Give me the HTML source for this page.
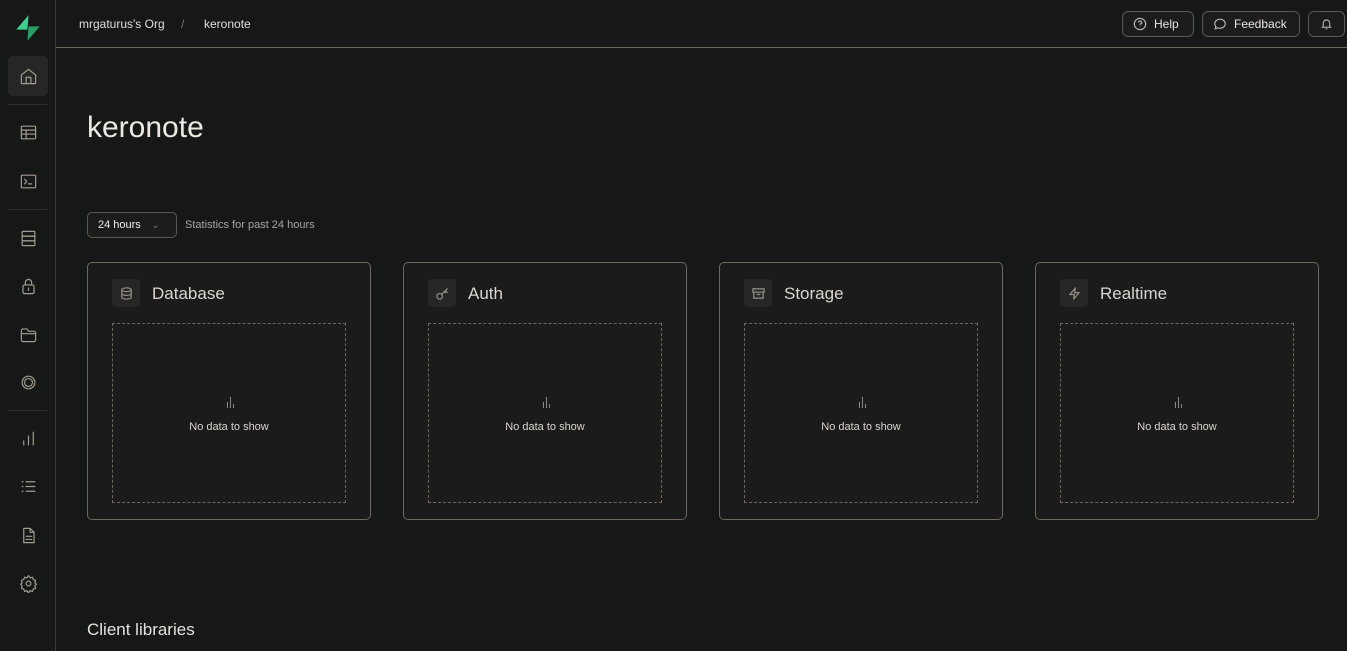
<!DOCTYPE html>
<html><head><style>
*{box-sizing:border-box;margin:0;padding:0}
body{width:1347px;height:651px;overflow:hidden;background:#161717;font-family:"Liberation Sans",sans-serif;color:#ededed;position:relative}
.side{position:absolute;left:0;top:0;width:56px;height:651px;border-right:1px solid #3a3833;background:#161717}
.ic{position:absolute;left:8px;width:40px;height:40px;display:flex;align-items:center;justify-content:center}
.ic svg{width:19px;height:19px;stroke:#a09c92;fill:none;stroke-width:1.5;stroke-linecap:round;stroke-linejoin:round}
.div{position:absolute;left:8px;width:39px;height:1px;background:#2e2e2e}
.top{position:absolute;left:56px;top:0;right:0;height:48px;border-bottom:1px solid #6d675c}
.crumb{position:absolute;top:17px;font-size:12px;color:#e0ded8}
.btn{position:absolute;top:11px;height:26px;border:1px solid #5c574e;border-radius:6px;background:#1c1c1c;font-size:12px;color:#e8e6e0;display:flex;align-items:center;gap:7px;padding:0 10px}
.btn svg{width:14px;height:14px;stroke:#bbb;fill:none;stroke-width:1.3}
h1{position:absolute;left:87px;top:111px;font-size:30px;font-weight:400;color:#ece9e2}
.sel{position:absolute;left:87px;top:212px;width:90px;height:26px;border:1px solid #5c574e;border-radius:5px;background:#1c1c1c;font-size:11px;color:#eee;padding:6px 10px}
.card{position:absolute;top:262px;width:284px;height:258px;border:1px solid #6d675c;border-radius:5px;background:#1b1b1b}
.ch{position:absolute;left:24px;top:16px;width:28px;height:28px;border-radius:4px;background:#262626;display:flex;align-items:center;justify-content:center}
.ch svg{width:15px;height:15px;stroke:#8f8b82;fill:none;stroke-width:1.4;stroke-linecap:round;stroke-linejoin:round}
.ct{position:absolute;left:64px;top:21px;font-size:17px;color:#d9d6cf}
.dash{position:absolute;left:24px;top:60px;width:234px;height:180px;border:1px dashed #6a665e}
.nd{position:absolute;left:0;right:0;top:97px;text-align:center;font-size:11px;color:#d8d6d0}
.bars{position:absolute;left:112px;top:72px;width:10px;height:12px}
.bars i{position:absolute;bottom:0;width:1px;background:#888}
h2{position:absolute;left:87px;top:620px;font-size:17px;font-weight:400;color:#e5e2dc}
</style></head><body>
<div class="side">
<svg style="position:absolute;left:14px;top:14px" width="28" height="28" viewBox="0 0 25 25"><path d="M13 1 L2 14 H12 Z" fill="#3ecf8e"/><path d="M12 24 L23 11 H13 Z" fill="#2a9d68"/></svg>
<div class="ic" style="top:56px;background:#262626;border-radius:6px"><svg viewBox="0 0 24 24"><path d="M3 10l9-7 9 7v10a1 1 0 0 1-1 1H4a1 1 0 0 1-1-1z"/><path d="M9 21v-8h6v8"/></svg></div>
<div class="div" style="top:104px"></div>
<div class="ic" style="top:112px"><svg viewBox="0 0 24 24"><rect x="3" y="4" width="18" height="16" rx="1"/><path d="M3 9h18M3 14h18M9 9v11"/></svg></div>
<div class="ic" style="top:161px"><svg viewBox="0 0 24 24"><rect x="3" y="4" width="18" height="16" rx="1"/><path d="M7 9l3 3-3 3M12 15h4"/></svg></div>
<div class="div" style="top:209px"></div>
<div class="ic" style="top:218px"><svg viewBox="0 0 24 24"><rect x="4" y="3" width="16" height="6" rx="1"/><rect x="4" y="9" width="16" height="6"/><rect x="4" y="15" width="16" height="6" rx="1"/></svg></div>
<div class="ic" style="top:266px"><svg viewBox="0 0 24 24"><rect x="5" y="10" width="14" height="11" rx="2"/><path d="M8 10V7a4 4 0 0 1 8 0v3M12 14v3"/></svg></div>
<div class="ic" style="top:314px"><svg viewBox="0 0 24 24"><path d="M3 7a2 2 0 0 1 2-2h5l2 3h7a2 2 0 0 1 2 2v9a2 2 0 0 1-2 2H5a2 2 0 0 1-2-2z"/><path d="M3 11h18"/></svg></div>
<div class="ic" style="top:362px"><svg viewBox="0 0 24 24"><circle cx="12" cy="12" r="8"/><circle cx="12" cy="12" r="5"/></svg></div>
<div class="div" style="top:410px"></div>
<div class="ic" style="top:418px"><svg viewBox="0 0 24 24"><path d="M6 20v-5M12 20V9M18 20V4"/></svg></div>
<div class="ic" style="top:466px"><svg viewBox="0 0 24 24"><path d="M4 6h1M4 12h1M4 18h1M9 6h11M9 12h11M9 18h11"/></svg></div>
<div class="ic" style="top:515px"><svg viewBox="0 0 24 24"><path d="M6 3h8l5 5v13H6z"/><path d="M14 3v5h5M9 13h7M9 17h7"/></svg></div>
<div class="ic" style="top:563px"><svg viewBox="0 0 24 24"><circle cx="12" cy="12" r="3"/><path d="M12 2l2 3 3-1 1 3 3 1-1 3 2 2-2 2 1 3-3 1-1 3-3-1-2 3-2-3-3 1-1-3-3-1 1-3-2-2 2-2-1-3 3-1 1-3 3 1z"/></svg></div>
</div>
<div class="top">
<div class="crumb" style="left:23px">mrgaturus's Org</div>
<div class="crumb" style="left:125px;color:#777">/</div>
<div class="crumb" style="left:148px">keronote</div>
</div>
<div class="btn" style="left:1122px;width:72px"><svg viewBox="0 0 16 16"><circle cx="8" cy="8" r="6.5"/><path d="M6.3 6.3a1.8 1.8 0 1 1 2.3 1.7c-.4.2-.6.5-.6 1M8 11v.3"/></svg>Help</div>
<div class="btn" style="left:1202px;width:98px"><svg viewBox="0 0 16 16"><path d="M8 2.5c3.3 0 6 2.3 6 5.2s-2.7 5.2-6 5.2c-.9 0-1.7-.2-2.4-.5L2.5 13.5l.9-2.6C2.5 10 2 8.9 2 7.7 2 4.8 4.7 2.5 8 2.5z"/></svg>Feedback</div>
<div class="btn" style="left:1308px;width:37px;padding:0 11px"><svg viewBox="0 0 16 16"><path d="M4 11V7a4 4 0 0 1 8 0v4l1 1H3zM7 14h2"/></svg></div>
<h1>keronote</h1>
<div class="sel">24 hours <span style="color:#888;margin-left:8px;font-size:9px">&#8964;</span></div>
<div style="position:absolute;left:185px;top:219px;font-size:11px;color:#a8a59d">Statistics for past 24 hours</div>

<div class="card" style="left:87px"><div class="ch"><svg viewBox="0 0 16 16"><ellipse cx="8" cy="4" rx="5" ry="2"/><path d="M3 4v8c0 1.1 2.2 2 5 2s5-.9 5-2V4M3 8c0 1.1 2.2 2 5 2s5-.9 5-2"/></svg></div><div class="ct">Database</div><div class="dash"><div class="bars"><i style="left:2px;height:6px"></i><i style="left:5px;height:11px"></i><i style="left:8px;height:4px"></i></div><div class="nd">No data to show</div></div></div>
<div class="card" style="left:403px"><div class="ch"><svg viewBox="0 0 16 16"><circle cx="5" cy="11" r="3"/><path d="M7 9l6-6M11 5l2 2M10 6l1 1"/></svg></div><div class="ct">Auth</div><div class="dash"><div class="bars"><i style="left:2px;height:6px"></i><i style="left:5px;height:11px"></i><i style="left:8px;height:4px"></i></div><div class="nd">No data to show</div></div></div>
<div class="card" style="left:719px"><div class="ch"><svg viewBox="0 0 16 16"><rect x="2" y="3" width="12" height="3.5"/><path d="M3 6.5V13h10V6.5M6.5 9h3"/></svg></div><div class="ct">Storage</div><div class="dash"><div class="bars"><i style="left:2px;height:6px"></i><i style="left:5px;height:11px"></i><i style="left:8px;height:4px"></i></div><div class="nd">No data to show</div></div></div>
<div class="card" style="left:1035px"><div class="ch"><svg viewBox="0 0 16 16"><path d="M9 2L3 9h5l-1 5 6-7H8z"/></svg></div><div class="ct">Realtime</div><div class="dash"><div class="bars"><i style="left:2px;height:6px"></i><i style="left:5px;height:11px"></i><i style="left:8px;height:4px"></i></div><div class="nd">No data to show</div></div></div>
<h2>Client libraries</h2>
</body></html>
